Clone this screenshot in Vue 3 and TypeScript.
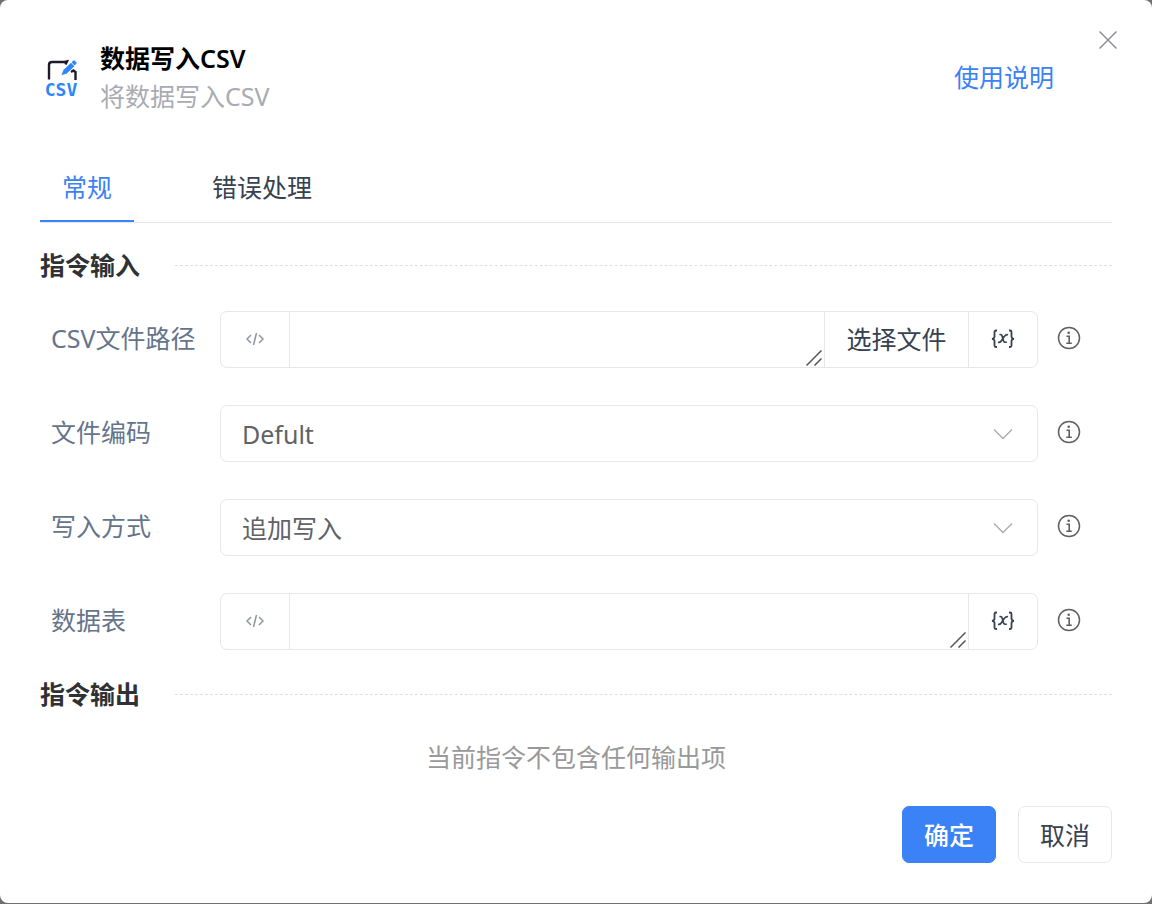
<script setup lang="ts">
import { ref } from 'vue'

interface Field {
  id: string
  label: string
  kind: 'text' | 'select'
  picker?: boolean
  options?: string[]
}

const fields: Field[] = [
  { id: 'path', label: 'CSV文件路径', kind: 'text', picker: true },
  { id: 'encoding', label: '文件编码', kind: 'select', options: ['Defult'] },
  { id: 'mode', label: '写入方式', kind: 'select', options: ['追加写入'] },
  { id: 'table', label: '数据表', kind: 'text' },
]

const values = ref<Record<string, string>>({
  path: '',
  encoding: 'Defult',
  mode: '追加写入',
  table: '',
})

const tabs = ['常规', '错误处理']
const activeTab = ref(0)
</script>

<template>
  <main class="dialog" role="dialog" aria-labelledby="dialog-title">
    <button class="close" type="button" aria-label="关闭">
      <svg width="20" height="20" viewBox="0 0 20 20">
        <path d="M1.500 1.500 18.500 18.500M18.500 1.500 1.500 18.500" fill="none" stroke="#8d9095" stroke-width="1.500" />
      </svg>
    </button>

    <header class="header">
      <svg class="logo" width="42" height="46" viewBox="0 0 42 46" aria-hidden="true">
        <path d="M9 25.500V11q0-3 3-3h12.500l2.500-.5-1.500 3M31 18l2.500-1.500 2 1.500v8" fill="none" stroke="#1d1a2b" stroke-width="2.400" />
        <path d="M21.500 21.300l1.900-5.300 7.600-7.200 3.400 3.400-7.600 7.200z" fill="#2d86fb" />
        <path d="M32.500 8.300l1.500-1.300 2 2-1.400 1.400z" fill="#2d86fb" stroke="#2d86fb" stroke-width="1.400" stroke-linejoin="round" />
        <text x="21" y="42" text-anchor="middle" class="logo-text">CSV</text>
      </svg>
      <div class="heading">
        <h1 id="dialog-title">数据写入CSV</h1>
        <p>将数据写入CSV</p>
      </div>
      <a class="help" href="#">使用说明</a>
    </header>

    <nav class="tabs" role="tablist">
      <button
        v-for="(tab, i) in tabs"
        :key="tab"
        type="button"
        role="tab"
        class="tab"
        :class="{ active: i === activeTab }"
        :aria-selected="i === activeTab"
        @click="activeTab = i"
      >{{ tab }}</button>
    </nav>

    <h2 class="section">指令输入</h2>

    <form class="fields" @submit.prevent>
      <div v-for="f in fields" :key="f.id" class="row">
        <label :for="f.id">{{ f.label }}</label>

        <div v-if="f.kind === 'text'" class="control">
          <button class="addon code" type="button" aria-label="表达式">
            <svg width="18" height="14" viewBox="0 0 18 14">
              <path d="M5 3 1 7l4 4M13 3l4 4-4 4M10.500 1 7.500 13" fill="none" stroke="#9094a0" stroke-width="1.500" />
            </svg>
          </button>
          <div class="area">
            <textarea :id="f.id" v-model="values[f.id]" rows="1"></textarea>
            <svg class="grip" width="16" height="16" viewBox="0 0 16 16" aria-hidden="true">
              <path d="M.5 15.500 15.500.5M8.500 15.500l7-7" fill="none" stroke="#555" stroke-width="1.500" />
            </svg>
          </div>
          <button v-if="f.picker" class="addon picker" type="button">选择文件</button>
          <button class="addon variable" type="button" aria-label="变量">
            <svg width="24" height="20" viewBox="0 0 24 20">
              <path
                d="M6 1.500H5Q3.500 1.500 3.500 3v4.500Q3.500 9.500 1 9.800 3.500 10 3.500 12v4.500Q3.500 18 5 18h1M18 1.500h1q1.500 0 1.500 1.500v4.500q0 2 2.500 2.300-2.500.2-2.500 2.200v4.500q0 1.500-1.500 1.500h-1"
                fill="none" stroke="#374151" stroke-width="1.800"
              />
              <path
                d="M8.500 5.800Q10.500 4.800 11.200 7.200L12.600 12Q13.200 13.800 15.800 13M17 5.800Q14.800 5.200 12.500 8.500L11 11Q9.300 13.800 7 13.200"
                fill="none" stroke="#374151" stroke-width="1.700"
              />
            </svg>
          </button>
        </div>

        <div v-else class="control">
          <select :id="f.id" v-model="values[f.id]">
            <option v-for="o in f.options" :key="o">{{ o }}</option>
          </select>
          <svg class="chevron" width="20" height="12" viewBox="0 0 20 12" aria-hidden="true">
            <path d="M1 1.500 10 10.500 19 1.500" fill="none" stroke="#a8abb2" stroke-width="1.400" />
          </svg>
        </div>

        <button class="info" type="button" :aria-label="f.label + '说明'">
          <svg width="24" height="24" viewBox="0 0 24 24">
            <circle cx="12" cy="12" r="10.500" fill="none" stroke="#5f6064" stroke-width="1.500" />
            <circle cx="11.700" cy="6.800" r="1.300" fill="#5f6064" />
            <path d="M9.500 10.300h2.700v7M9.300 17.300h5.500" fill="none" stroke="#5f6064" stroke-width="1.600" />
          </svg>
        </button>
      </div>
    </form>

    <h2 class="section">指令输出</h2>
    <p class="empty">当前指令不包含任何输出项</p>

    <footer class="footer">
      <button class="btn primary" type="button">确定</button>
      <button class="btn" type="button">取消</button>
    </footer>
  </main>
</template>

<style>
body {
  background: #707070;
}
</style>

<style scoped>
.dialog,
.dialog * {
  box-sizing: border-box;
}

.dialog {
  position: relative;
  min-height: calc(100vh - 1px);
  padding: 39px 40px 40px;
  border-radius: 8px;
  background: #fff;
  color: #374151;
  font-family: "Noto Sans", "Noto Sans CJK SC", sans-serif;
  font-size: 25px;
  line-height: 38px;
}

button {
  margin: 0;
  padding: 0;
  border: 0;
  background: none;
  color: inherit;
  font: inherit;
  cursor: pointer;
}

svg {
  display: block;
}

h1,
h2,
p {
  margin: 0;
  font-size: inherit;
}

.close {
  position: absolute;
  top: 30px;
  right: 34px;
}

.header {
  display: flex;
  align-items: center;
  padding-right: 58px;
}

.logo {
  margin-right: 18px;
}

.logo-text {
  font-family: "DejaVu Sans Mono", monospace;
  font-size: 18px;
  font-weight: 700;
  line-height: 20px;
  fill: #2d86fb;
}

.heading {
  flex: 1;
}

h1 {
  color: #000;
  font-weight: 600;
}

.heading p {
  color: #a9abb2;
}

.help {
  color: #3b82f6;
  text-decoration: none;
}

.tabs {
  display: flex;
  gap: 56px;
  margin-top: 39px;
  border-bottom: 1px solid #e5e6e9;
}

.tab {
  padding: 14px 22px;
  border-bottom: 2px solid transparent;
}

.tab.active {
  border-color: #3b82f6;
  color: #3b82f6;
}

.section {
  display: flex;
  align-items: center;
  gap: 35px;
  margin-top: 23px;
  color: #303133;
  font-weight: 700;
}

.section::after {
  flex: 1;
  border-top: 1px dashed #dcdfe6;
  content: "";
}

.fields {
  display: flex;
  flex-direction: column;
  gap: 37px;
  margin-top: 27px;
}

.row {
  display: flex;
  align-items: center;
  padding: 0 31px 0 11px;
}

.row label {
  width: 169px;
  padding-bottom: 3px;
  color: #64748b;
}

.control {
  position: relative;
  display: flex;
  flex: 1;
  height: 57px;
  border: 1px solid #e5e7eb;
  border-radius: 7px;
}

.addon {
  display: flex;
  align-items: center;
  justify-content: center;
  width: 69px;
  padding-bottom: 2px;
  border-left: 1px solid #e5e7eb;
}

.addon.code {
  width: 68px;
  border-left: 0;
}

.addon.picker {
  width: 144px;
}

.area {
  position: relative;
  display: flex;
  flex: 1;
  border-left: 1px solid #e5e7eb;
}

textarea {
  flex: 1;
  min-width: 0;
  padding: 8px 22px;
  border: 0;
  outline: 0;
  background: none;
  color: #606266;
  font: inherit;
  resize: none;
}

.grip {
  position: absolute;
  right: 2px;
  bottom: 1px;
  pointer-events: none;
}

select {
  width: 100%;
  padding: 0 21px;
  border: 0;
  outline: 0;
  background: none;
  color: #606266;
  font: inherit;
  appearance: none;
}

.chevron {
  position: absolute;
  top: 22px;
  right: 24px;
  pointer-events: none;
}

.info {
  margin-left: 19px;
  padding-bottom: 3px;
}

.fields + .section {
  margin-top: 25px;
}

.empty {
  margin-top: 25px;
  color: #999;
  text-align: center;
}

.footer {
  display: flex;
  justify-content: flex-end;
  gap: 22px;
  margin-top: 30px;
}

.btn {
  height: 57px;
  padding: 0 21px;
  border: 1px solid #e5e7eb;
  border-radius: 7px;
}

.btn.primary {
  border-color: #3b82f6;
  background: #3b82f6;
  color: #fff;
  font-weight: 500;
}
</style>
